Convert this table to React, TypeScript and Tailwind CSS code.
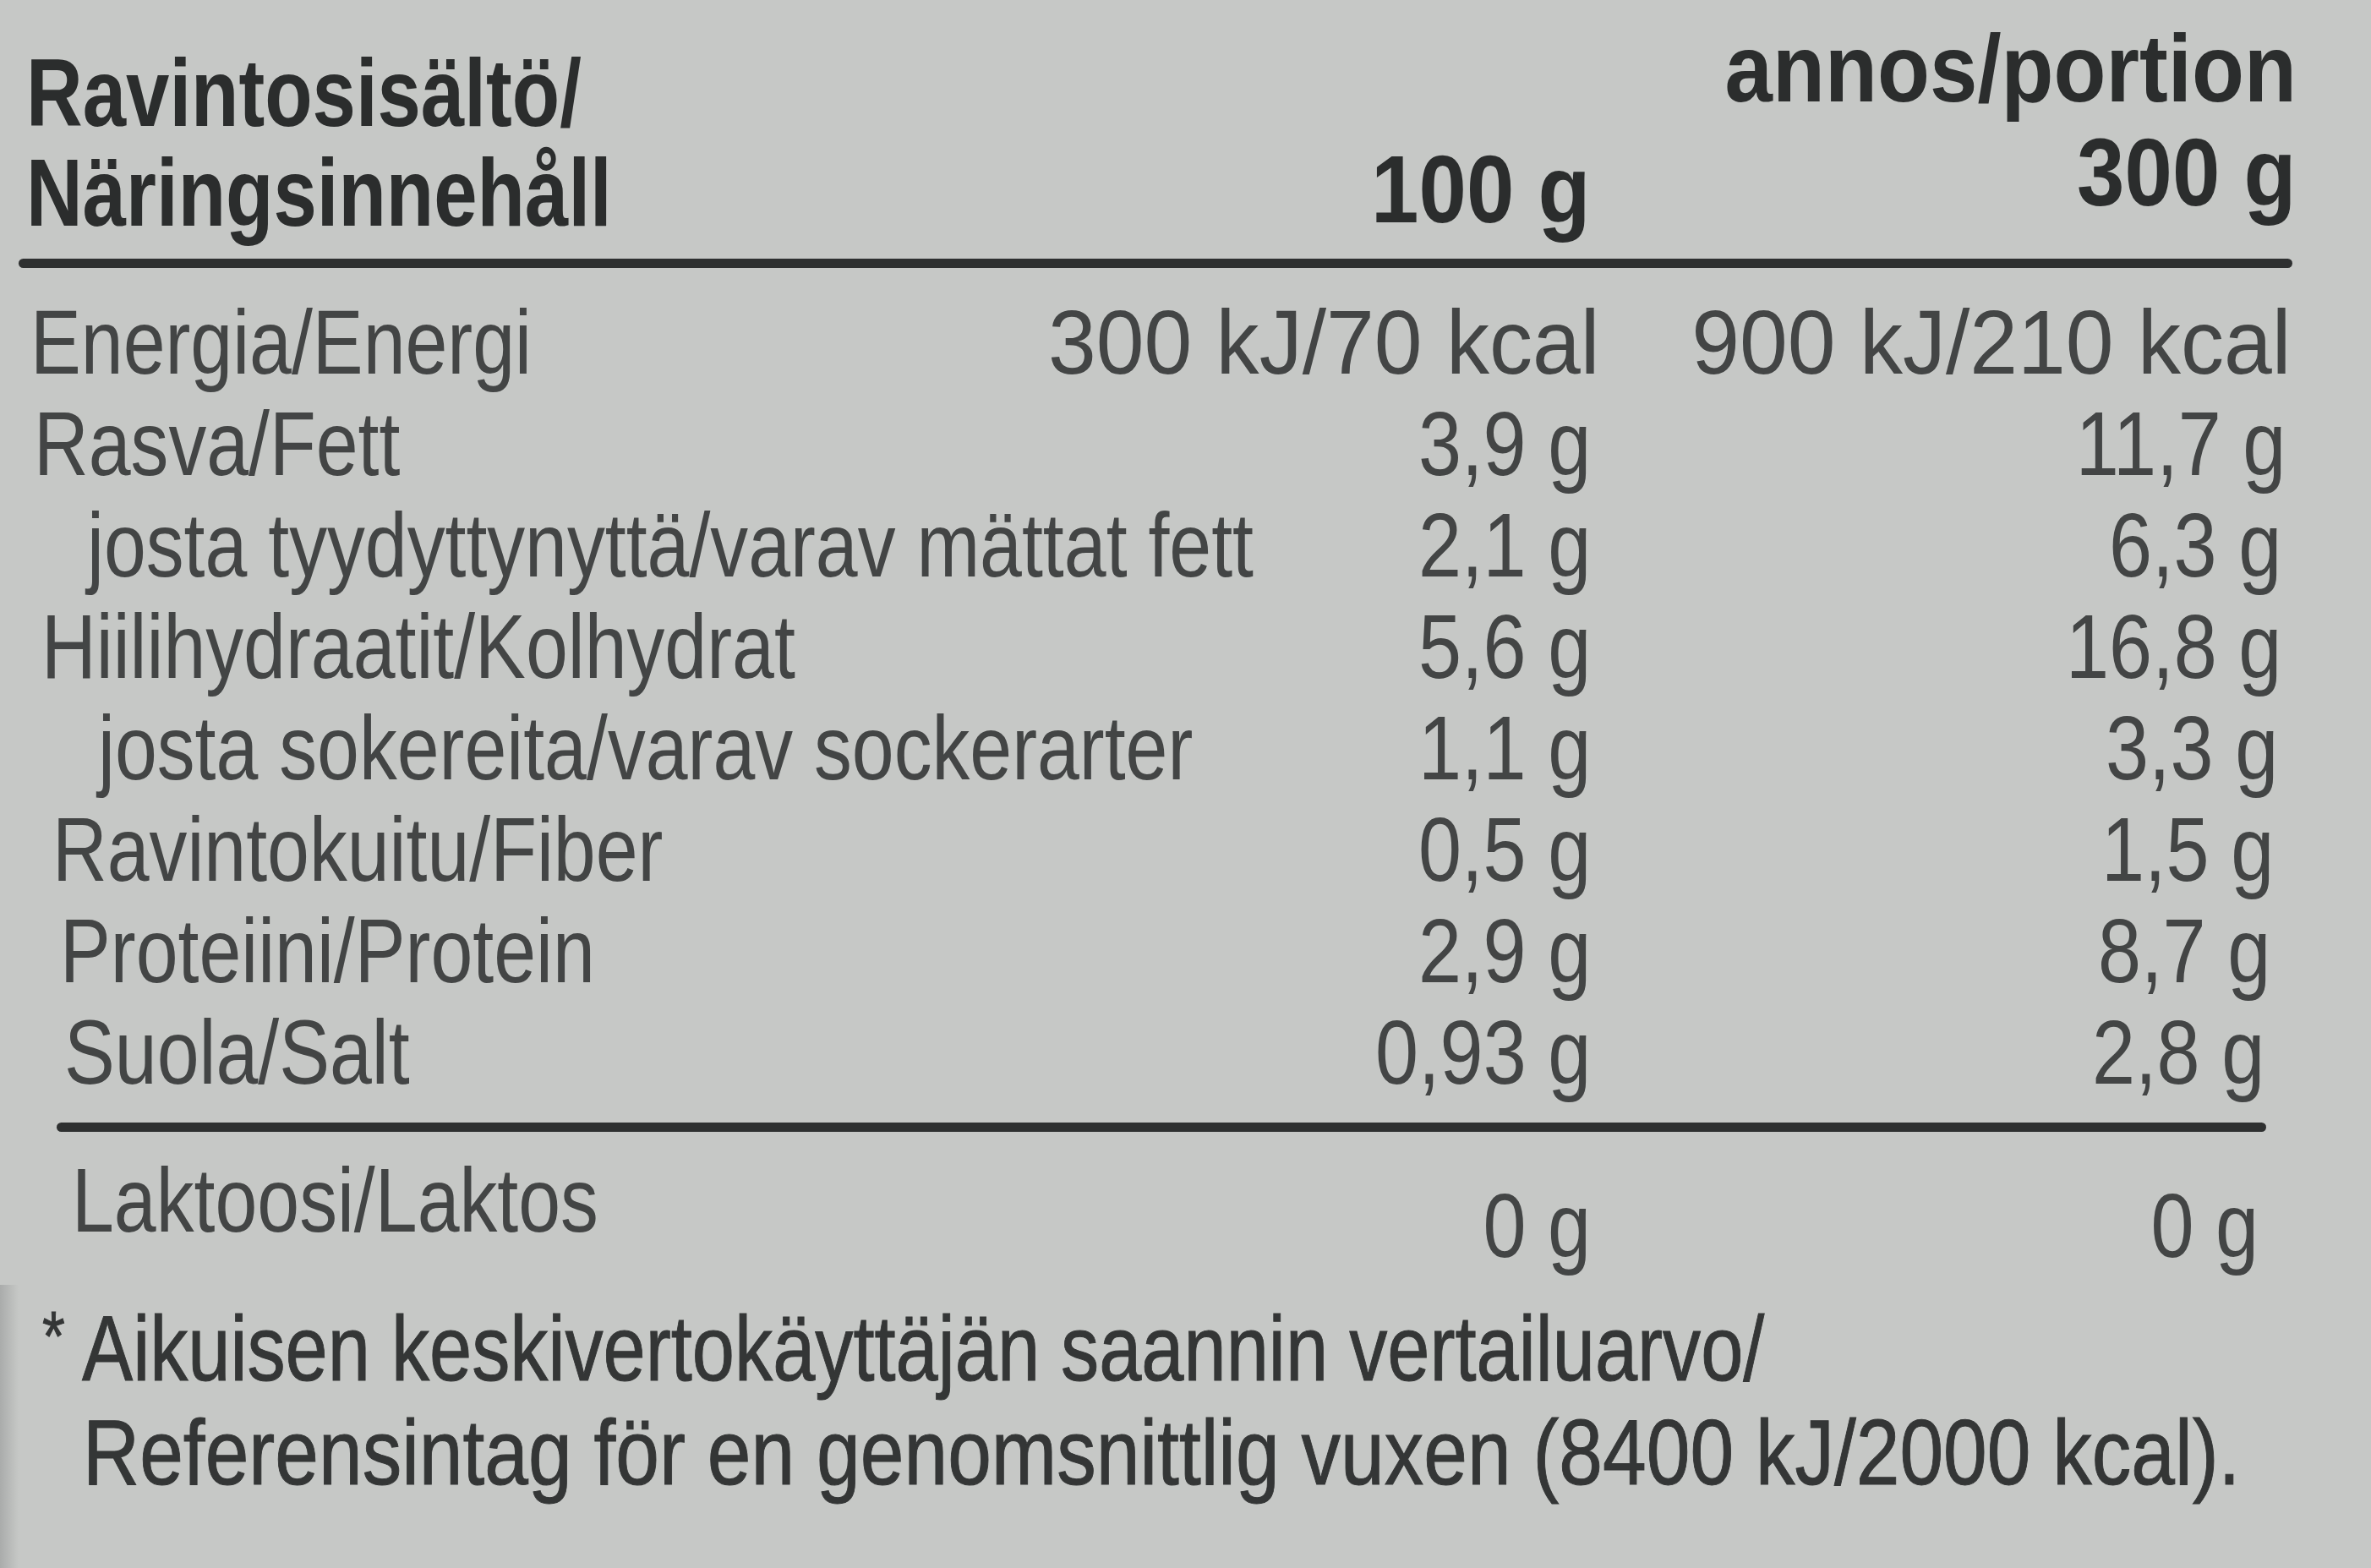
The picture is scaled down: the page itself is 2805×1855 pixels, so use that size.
import type { ReactNode } from 'react'

const font = { fontFamily: '"Liberation Sans Narrow", "Liberation Sans", Arial, sans-serif' }

// condensed look: the narrow face isn't available, so squeeze Liberation Sans
function Sq({ children, cls, right }: { children: ReactNode; cls: string; right?: boolean }) {
  return (
    <span className={`inline-block whitespace-nowrap ${right ? 'origin-right' : 'origin-left'} ${cls}`}>
      {children}
    </span>
  )
}

type Row = {
  label: string
  a: string
  b: string
  lc: string
  rc: string
  wide?: boolean
}

const rows: Row[] = [
  { label: 'Energia/Energi', a: '300 kJ/70 kcal', b: '900 kJ/210 kcal', lc: 'pl-[36px]', rc: 'pr-[95px]', wide: true },
  { label: 'Rasva/Fett', a: '3,9 g', b: '11,7 g', lc: 'pl-[40px]', rc: 'pr-[101px]' },
  { label: 'josta tyydyttynyttä/varav mättat fett', a: '2,1 g', b: '6,3 g', lc: 'pl-[103px]', rc: 'pr-[106px]' },
  { label: 'Hiilihydraatit/Kolhydrat', a: '5,6 g', b: '16,8 g', lc: 'pl-[49px]', rc: 'pr-[106px]' },
  { label: 'josta sokereita/varav sockerarter', a: '1,1 g', b: '3,3 g', lc: 'pl-[116px]', rc: 'pr-[110px]' },
  { label: 'Ravintokuitu/Fiber', a: '0,5 g', b: '1,5 g', lc: 'pl-[62px]', rc: 'pr-[115px]' },
  { label: 'Proteiini/Protein', a: '2,9 g', b: '8,7 g', lc: 'pl-[71px]', rc: 'pr-[119px]' },
  { label: 'Suola/Salt', a: '0,93 g', b: '2,8 g', lc: 'pl-[76px]', rc: 'pr-[126px]' },
]

function NutritionRow({ row }: { row: Row }) {
  const num = row.wide ? 'scale-x-[0.945]' : 'scale-x-[0.85]'
  return (
    <div className="grid grid-cols-[1202px_680px_1fr] text-[108px] leading-[120px] text-[#434545]">
      <div className={`whitespace-nowrap ${row.lc}`}>
        <Sq cls="scale-x-[0.83]">{row.label}</Sq>
      </div>
      <div className="text-right">
        <Sq cls={num} right>{row.a}</Sq>
      </div>
      <div className={`text-right ${row.rc}`}>
        <Sq cls={num} right>{row.b}</Sq>
      </div>
    </div>
  )
}

export default function App() {
  return (
    <div className="relative w-[2805px] h-[1855px] overflow-hidden bg-[#c6c8c6]" style={font}>
      {/* darker package edge bottom-left */}
      <div className="absolute left-0 top-[1520px] w-[22px] h-[335px] bg-gradient-to-r from-[#8e9090] to-transparent opacity-50" />

      <div className="pt-[39px]">
        {/* header */}
        <div className="grid grid-cols-[1202px_680px_1fr] items-start text-[114px] leading-[123px] font-bold text-[#2b2d2d]">
          <div className="pl-[31px] mt-[12px] leading-[118px]">
            <div><Sq cls="scale-x-[0.81]">Ravintosisältö/</Sq></div>
            <div><Sq cls="scale-x-[0.81]">Näringsinnehåll</Sq></div>
          </div>
          <div className="text-right mt-[123px]">
            <Sq cls="scale-x-[0.89]" right>100 g</Sq>
          </div>
          <div className="text-right pr-[88px] -mt-[20px]">
            <div><Sq cls="scale-x-[0.89]" right>annos/portion</Sq></div>
            <div><Sq cls="scale-x-[0.89]" right>300 g</Sq></div>
          </div>
        </div>

        <div className="mt-[19px] ml-[22px] w-[2690px] h-[11px] rounded-full bg-[#2e3030]" />

        <div className="mt-[28px]">
          {rows.map(r => (
            <NutritionRow key={r.label} row={r} />
          ))}
        </div>

        <div className="mt-[23px] ml-[67px] w-[2614px] h-[11px] rounded-full bg-[#2e3030]" />

        <div className="mt-[21px] grid grid-cols-[1202px_680px_1fr] text-[108px] leading-[120px] text-[#434545]">
          <div className="pl-[85px]">
            <Sq cls="scale-x-[0.83]">Laktoosi/Laktos</Sq>
          </div>
          <div className="text-right pt-[30px]">
            <Sq cls="scale-x-[0.85]" right>0 g</Sq>
          </div>
          <div className="text-right pt-[30px] pr-[133px]">
            <Sq cls="scale-x-[0.85]" right>0 g</Sq>
          </div>
        </div>

        {/* footnote */}
        <div className="mt-[23px] text-[110px] leading-[123px] text-[#343636] [-webkit-text-stroke:1px_#343636]">
          <div className="pl-[50px] whitespace-nowrap">
            <span className="inline-block align-top text-[84px] leading-[84px] mt-[6px] mr-[14px] scale-x-[0.82] origin-left">*</span>
            <Sq cls="scale-x-[0.82]">Aikuisen keskivertokäyttäjän saannin vertailuarvo/</Sq>
          </div>
          <div className="pl-[98px]">
            <Sq cls="scale-x-[0.845]">Referensintag för en genomsnittlig vuxen (8400 kJ/2000 kcal).</Sq>
          </div>
        </div>
      </div>
    </div>
  )
}
